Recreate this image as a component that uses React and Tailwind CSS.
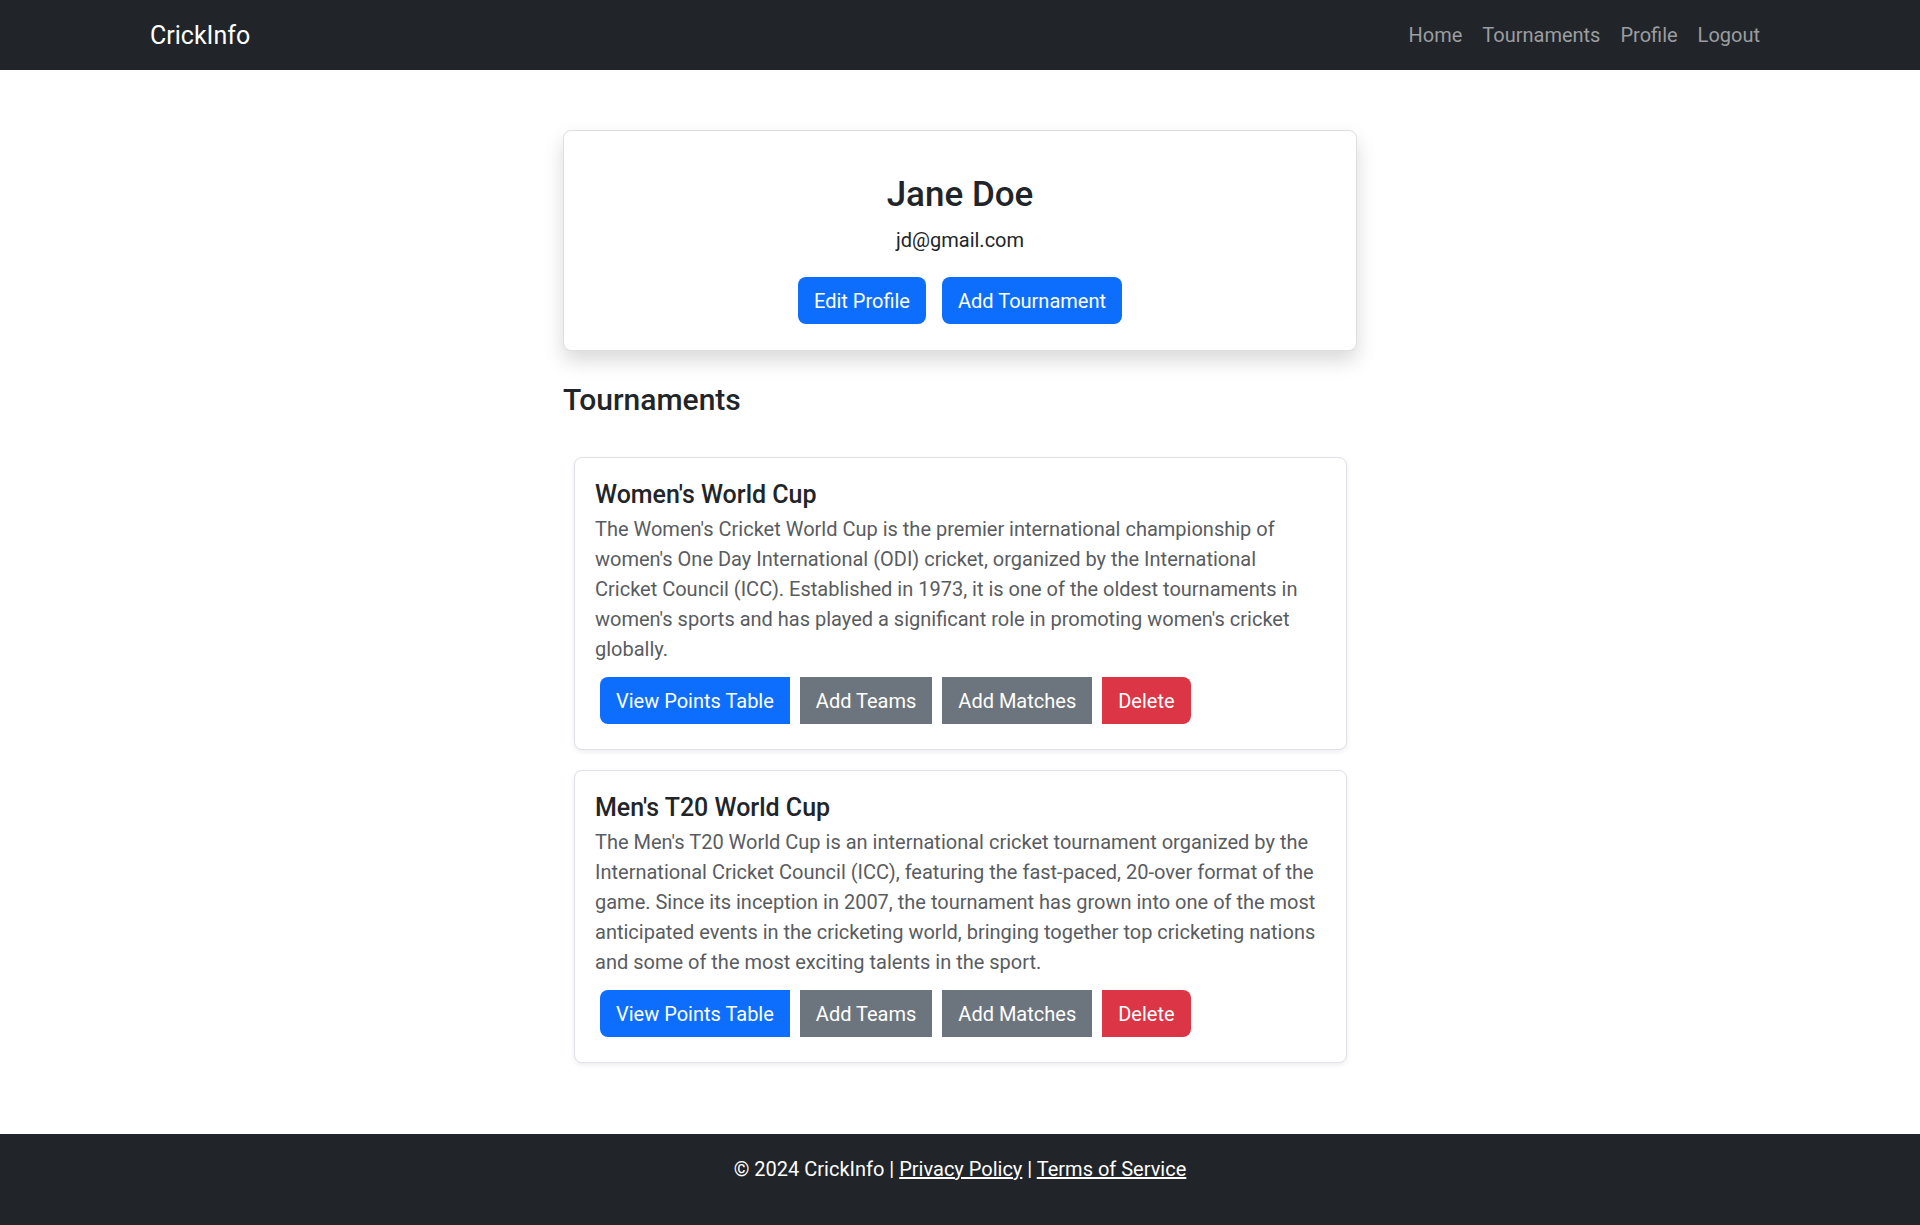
import React from 'react';

const tournaments = [
    {
        id: 1,
        name: "Women's World Cup",
        description:
            "The Women's Cricket World Cup is the premier international championship of women's One Day International (ODI) cricket, organized by the International Cricket Council (ICC). Established in 1973, it is one of the oldest tournaments in women's sports and has played a significant role in promoting women's cricket globally.",
    },
    {
        id: 2,
        name: "Men's T20 World Cup",
        description:
            "The Men's T20 World Cup is an international cricket tournament organized by the International Cricket Council (ICC), featuring the fast-paced, 20-over format of the game. Since its inception in 2007, the tournament has grown into one of the most anticipated events in the cricketing world, bringing together top cricketing nations and some of the most exciting talents in the sport.",
    },
];

const navLinks = ['Home', 'Tournaments', 'Profile', 'Logout'];

const btn = 'border border-transparent px-[15px] py-[7.5px] text-[20px] leading-[30px] text-white';

const Navbar = () => (
    <nav className="bg-[#212529] h-[70px] px-[150px] flex items-center justify-between">
        <a href="#" className="text-white text-[25px] leading-[37px] py-[6px]">
            CrickInfo
        </a>
        <div className="flex items-center">
            {navLinks.map((link) => (
                <a key={link} href="#" className="px-[10px] py-[10px] text-[20px] leading-[30px] text-[#9b9da0]">
                    {link}
                </a>
            ))}
        </div>
    </nav>
);

const TournamentCard = ({ tournament }) => (
    <div className="ml-[11px] mr-[10px] mb-[20px] bg-white border border-[#dee2e6] rounded-[8px] shadow-[0_2px_5px_rgba(0,0,0,0.075)] px-[20px] pt-[22px] pb-[20px]">
        <h5 className="text-[25px] leading-[30px] font-medium text-[#212529] mb-[4px]">{tournament.name}</h5>
        <p className="text-[20px] leading-[30px] text-[#595c5f] pr-[6px]">{tournament.description}</p>
        <div className="flex mt-[8px]">
            <button className={`${btn} m-[5px] bg-[#0d6efd] rounded-l-[8px]`}>View Points Table</button>
            <button className={`${btn} m-[5px] bg-[#6c757d]`}>Add Teams</button>
            <button className={`${btn} m-[5px] bg-[#6c757d]`}>Add Matches</button>
            <button className={`${btn} m-[5px] bg-[#dc3545] rounded-r-[8px]`}>Delete</button>
        </div>
    </div>
);

const App = () => {
    return (
        <div className="min-h-screen flex flex-col bg-white font-['Roboto','Liberation_Sans',sans-serif] text-[#212529]">
            <Navbar />

            <main className="w-[794px] mx-auto mt-[60px] mb-[48px]">
                {/* Profile card */}
                <div className="bg-white border border-[#dfdfdf] rounded-[8px] shadow-[0_10px_20px_rgba(0,0,0,0.15)] pt-[43px] pb-[26px] flex flex-col items-center">
                    <h3 className="text-[35px] leading-[42px] font-medium mb-[9px]">Jane Doe</h3>
                    <p className="text-[20px] leading-[30px] mb-[22px]">jd@gmail.com</p>
                    <div className="flex gap-[16px]">
                        <button className={`${btn} bg-[#0d6efd] rounded-[8px]`}>Edit Profile</button>
                        <button className={`${btn} bg-[#0d6efd] rounded-[8px]`}>Add Tournament</button>
                    </div>
                </div>

                <h4 className="text-[30px] leading-[36px] font-medium mt-[31px] mb-[39px]">Tournaments</h4>

                {tournaments.map((t) => (
                    <TournamentCard key={t.id} tournament={t} />
                ))}
            </main>

            <footer className="mt-auto bg-[#212529] h-[91px] pt-[20px] text-center text-white text-[20px] leading-[30px]">
                © 2024 CrickInfo | <a href="#" className="underline">Privacy Policy</a> |{' '}
                <a href="#" className="underline">Terms of Service</a>
            </footer>
        </div>
    );
};

export default App;
